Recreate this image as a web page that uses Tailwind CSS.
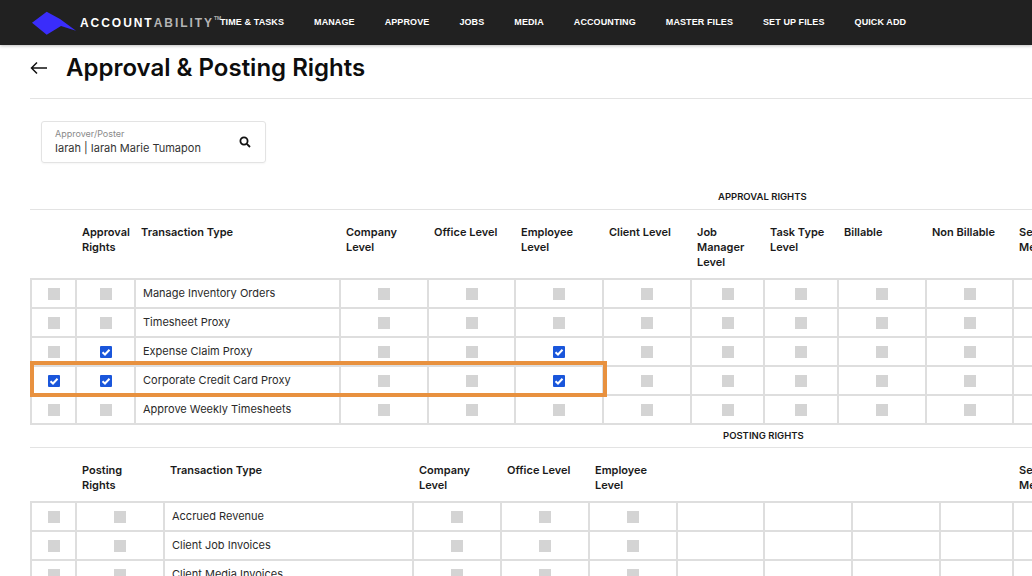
<!DOCTYPE html>
<html lang="en">

<head>
    <meta charset="UTF-8">
    <title>Approval &amp; Posting Rights</title>
    <script src="https://cdn.jsdelivr.net/npm/@tailwindcss/browser@4"></script>
</head>

<body class="bg-white h-[576px] w-[1032px] overflow-hidden relative font-['Inter',sans-serif] text-[#1a1a1a]">
    <!-- Top nav -->
    <header class="h-[45px] bg-[#212121] flex items-center shadow-[0_1px_3px_rgba(0,0,0,0.25)] relative">
        <svg class="absolute left-0 top-0" width="80" height="45" viewBox="0 0 80 45">
            <polygon points="32,22.7 46.7,11.7 60,19 76,30.7 61,26 46.7,34.7" fill="#3a2dfb" />
        </svg>
        <div class="ml-[80px] w-[140px] flex items-start text-[12px] font-bold tracking-[1.95px] font-['Liberation_Sans',sans-serif] text-white">
            <span>ACCOUNT</span><span class="text-[#b5b5b5]">ABILITY</span><span class="text-[5px] tracking-normal text-[#b5b5b5] mt-[1px]">TM</span>
        </div>
        <nav class="flex gap-[30px] text-[9px] font-bold text-white font-['Liberation_Sans',sans-serif] tracking-[0.1px]">
            <a>TIME &amp; TASKS</a>
            <a>MANAGE</a>
            <a>APPROVE</a>
            <a>JOBS</a>
            <a>MEDIA</a>
            <a>ACCOUNTING</a>
            <a>MASTER FILES</a>
            <a>SET UP FILES</a>
            <a>QUICK ADD</a>
        </nav>
    </header>

    <!-- Title -->
    <div class="ml-[30px] h-[54px] flex items-center border-b border-[#e3e3e3] pb-[7px]">
        <svg width="18" height="14" viewBox="0 0 18 14" fill="none" stroke="#111" stroke-width="1.5">
            <path d="M17 7H1.5M7 1.5L1.5 7L7 12.5" />
        </svg>
        <h1 class="ml-[18px] text-[24px] font-semibold text-[#0d0d0d]">Approval &amp; Posting Rights</h1>
    </div>

    <!-- Approver search -->
    <div class="ml-[41px] mt-[22px] w-[225px] h-[42px] border border-[#e3e3e3] rounded-[3px] flex items-center justify-between pl-[13px] pr-[14px] shadow-[0_1px_2px_rgba(0,0,0,0.04)]">
        <div class="flex flex-col">
            <span class="text-[9px] leading-[12px] text-[#8a8a8a]">Approver/Poster</span>
            <span class="text-[11px] leading-[16px] text-[#333]">Iarah | Iarah Marie Tumapon</span>
        </div>
        <svg width="12" height="12" viewBox="0 0 12 12" fill="none" stroke="#111" stroke-width="1.8">
            <circle cx="5" cy="5" r="3.6" />
            <path d="M7.8 7.8L11 11" />
        </svg>
    </div>

    <!-- Approval rights -->
    <div class="mt-[27px] ml-[30px] h-[20px] border-b border-[#e3e3e3] relative">
        <span class="absolute left-[688px] top-0 text-[9.5px] leading-[14px] font-semibold">APPROVAL RIGHTS</span>
    </div>
    <table id="approval" class="ml-[30px] w-[1100px] table-fixed border-collapse">
        <colgroup>
            <col class="w-[45px]"><col class="w-[59px]"><col class="w-[205px]"><col class="w-[88px]"><col class="w-[87px]"><col class="w-[88px]"><col class="w-[88px]"><col class="w-[73px]"><col class="w-[74px]"><col class="w-[88px]"><col class="w-[87px]"><col class="w-[118px]">
        </colgroup>
        <thead>
            <tr class="h-[69px] align-top text-left text-[11px] leading-[15px] font-semibold">
                <th></th>
                <th class="pt-[15px] pl-[6px] font-semibold">Approval<br>Rights</th>
                <th class="pt-[15px] pl-[6px] font-semibold">Transaction Type</th>
                <th class="pt-[15px] pl-[6px] font-semibold">Company<br>Level</th>
                <th class="pt-[15px] pl-[6px] font-semibold">Office Level</th>
                <th class="pt-[15px] pl-[6px] font-semibold">Employee<br>Level</th>
                <th class="pt-[15px] pl-[6px] font-semibold">Client Level</th>
                <th class="pt-[15px] pl-[6px] font-semibold">Job<br>Manager<br>Level</th>
                <th class="pt-[15px] pl-[6px] font-semibold">Task Type<br>Level</th>
                <th class="pt-[15px] pl-[6px] font-semibold">Billable</th>
                <th class="pt-[15px] pl-[6px] font-semibold">Non Billable</th>
                <th class="pt-[15px] pl-[6px] font-semibold">Se<br>Me</th>
            </tr>
        </thead>
        <tbody></tbody>
    </table>

    <!-- Posting rights -->
    <div class="mt-[1px] ml-[30px] h-[22px] border-b border-[#e3e3e3] relative">
        <span class="absolute left-[693px] top-[3px] text-[9.5px] leading-[14px] font-semibold">POSTING RIGHTS</span>
    </div>
    <table id="posting" class="ml-[30px] w-[1100px] table-fixed border-collapse">
        <colgroup>
            <col class="w-[45px]"><col class="w-[88px]"><col class="w-[249px]"><col class="w-[88px]"><col class="w-[88px]"><col class="w-[88px]"><col class="w-[87px]"><col class="w-[88px]"><col class="w-[88px]"><col class="w-[73px]"><col class="w-[118px]">
        </colgroup>
        <thead>
            <tr class="h-[54px] align-top text-left text-[11px] leading-[15px] font-semibold">
                <th></th>
                <th class="pt-[15px] pl-[6px] font-semibold">Posting<br>Rights</th>
                <th class="pt-[15px] pl-[6px] font-semibold">Transaction Type</th>
                <th class="pt-[15px] pl-[6px] font-semibold">Company<br>Level</th>
                <th class="pt-[15px] pl-[6px] font-semibold">Office Level</th>
                <th class="pt-[15px] pl-[6px] font-semibold">Employee<br>Level</th>
                <th></th><th></th><th></th><th></th>
                <th class="pt-[15px] pl-[6px] font-semibold">Se<br>Me</th>
            </tr>
        </thead>
        <tbody></tbody>
    </table>

    <!-- Orange highlight over the proxy row -->
    <div class="absolute left-[30px] top-[361px] w-[577px] h-[36px] border-4 border-[#e8913f]"></div>

    <script>
        const boxOff = '<span class="block mx-auto size-[12px] bg-[#d4d4d4]"></span>';
        const boxOn = '<span class="block mx-auto size-[12px] bg-[#1a56db] rounded-[1px]"><svg class="size-[12px]" viewBox="0 0 12 12" fill="none" stroke="white" stroke-width="2"><path d="M2.5 6.2L5 8.5L9.5 3.8" /></svg></span>';
        const cell = 'h-[29px] border-2 border-[#dedede] text-center p-0';
        const nameCell = 'h-[29px] border-2 border-[#dedede] text-left pl-[7px] text-[11px] text-[#2a2a2a]';

        // approval: 11 checkbox columns, posting: only the first 5 and the rest empty
        function fillRows(tableId, rows, boxCols, totalCols) {
            const tbody = document.querySelector('#' + tableId + ' tbody');
            rows.forEach(([name, checked]) => {
                let html = '<tr>';
                for (let i = 0; i < totalCols; i++) {
                    if (i === 2) {
                        html += `<td class="${nameCell}">${name}</td>`;
                    } else if (i < boxCols) {
                        html += `<td class="${cell}">${checked.includes(i) ? boxOn : boxOff}</td>`;
                    } else {
                        html += `<td class="${cell}"></td>`;
                    }
                }
                tbody.innerHTML += html + '</tr>';
            });
        }

        fillRows('approval', [
            ['Manage Inventory Orders', []],
            ['Timesheet Proxy', []],
            ['Expense Claim Proxy', [1, 5]],
            ['Corporate Credit Card Proxy', [0, 1, 5]],
            ['Approve Weekly Timesheets', []]
        ], 11, 12);

        fillRows('posting', [
            ['Accrued Revenue', []],
            ['Client Job Invoices', []],
            ['Client Media Invoices', []]
        ], 6, 11);
    </script>
</body>

</html>
